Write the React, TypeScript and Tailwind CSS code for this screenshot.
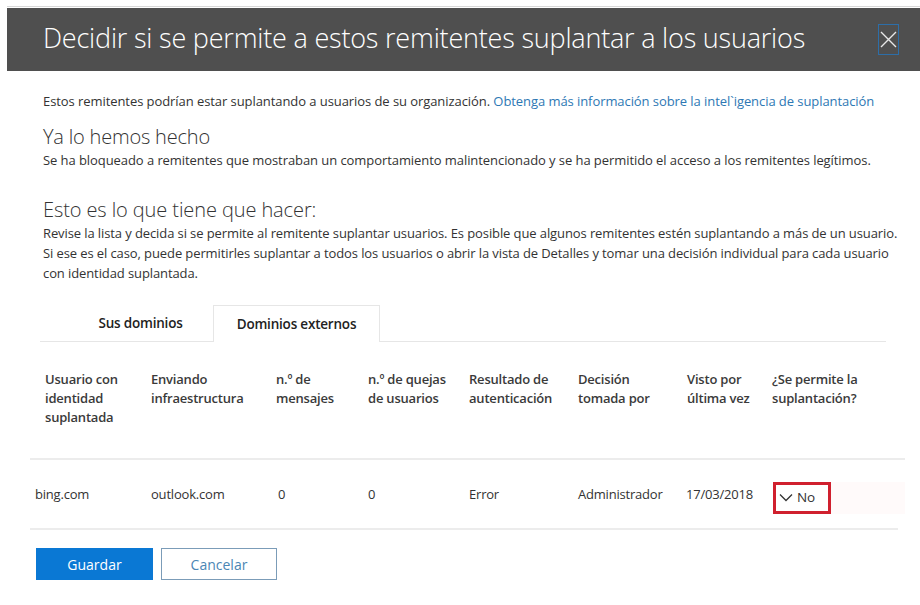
import React from "react";

const font = { fontFamily: '"Open Sans", "Noto Sans", sans-serif' };

const headers = [
  ["Usuario con", "identidad", "suplantada"],
  ["Enviando", "infraestructura"],
  ["n.º de", "mensajes"],
  ["n.º de quejas", "de usuarios"],
  ["Resultado de", "autenticación"],
  ["Decisión", "tomada por"],
  ["Visto por", "última vez"],
  ["¿Se permite la", "suplantación?"],
];

const cols = "grid grid-cols-[121px_125px_92px_101px_109px_109px_85px_133px]";

export default function App() {
  return (
    <div className="w-[920px] h-[605px] bg-white overflow-hidden text-[#333]" style={font}>
      <div className="pt-[6px] pl-[7px]">
        <div className="border-t border-[#d8d8d8] pt-px">
          <div className="h-[63px] bg-[#4f4f4f] flex items-center pl-[36px] pr-[21px] justify-between">
            <div className="text-white text-[27px] font-light tracking-[-0.2px] leading-none pb-[5px]">
              Decidir si se permite a estos remitentes suplantar a los usuarios
            </div>
            <div className="w-[21px] h-[31px] border border-[#2d6ea8] flex items-center justify-center">
              <svg width="17" height="17" viewBox="0 0 17 17">
                <path d="M1 1 L16 16 M16 1 L1 16" stroke="#e8e8e8" strokeWidth="1.4" fill="none" />
              </svg>
            </div>
          </div>
        </div>
      </div>

      <div className="pl-[43px]">
        <p className="mt-[20px] text-[13px] leading-[20px] tracking-[-0.07px]">
          Estos remitentes podrían estar suplantando a usuarios de su organización.{" "}
          <span className="text-[#2e78b4]">Obtenga más información sobre la intel`igencia de suplantación</span>
        </p>
        <h2 className="mt-[13px] text-[20px] leading-[26px] font-light tracking-[-0.2px]">Ya lo hemos hecho</h2>
        <p className="text-[13px] leading-[20px] tracking-[-0.07px]">
          Se ha bloqueado a remitentes que mostraban un comportamiento malintencionado y se ha permitido el acceso a los remitentes legítimos.
        </p>
        <h2 className="mt-[27px] text-[20px] leading-[26px] font-light tracking-[-0.1px]">Esto es lo que tiene que hacer:</h2>
        <p className="text-[13px] leading-[20px] tracking-[-0.1px] w-[877px] whitespace-nowrap">
          Revise la lista y decida si se permite al remitente suplantar usuarios. Es posible que algunos remitentes estén suplantando a más de un usuario.
          <br />
          Si ese es el caso, puede permitirles suplantar a todos los usuarios o abrir la vista de Detalles y tomar una decisión individual para cada usuario
          <br />
          con identidad suplantada.
        </p>
      </div>

      <div className="mt-[22px] ml-[40px] w-[846px] flex items-end border-b border-[#e6e6e6] h-[37px]">
        <div className="ml-[33px] w-[135px] h-[36px] flex items-center justify-center text-[13.5px] font-semibold text-[#222] tracking-[-0.2px]">
          Sus dominios
        </div>
        <div className="ml-[5px] w-[167px] h-[37px] -mb-px bg-white border border-b-0 border-[#e6e6e6] flex items-center justify-center text-[13.5px] font-semibold text-[#222] tracking-[-0.2px]">
          Dominios externos
        </div>
      </div>

      <div className="ml-[30px] w-[875px]">
        <div className={`${cols} pt-[28px] pb-[31px] border-b-2 border-[#ececec] text-[13px] leading-[19px] font-semibold text-[#3a3a3a] tracking-[-0.2px]`}>
          {headers.map((h, i) => (
            <div key={i} className={i === 0 ? "pl-[15px]" : ""}>
              {h.map((l, j) => (
                <div key={j}>{l}</div>
              ))}
            </div>
          ))}
        </div>
        <div className={`${cols} h-[70px] items-center border-b-2 border-[#ececec] text-[13px] text-[#333] tracking-[-0.2px] w-[868px]`}>
          <div className="pl-[5px]">bing.com</div>
          <div>outlook.com</div>
          <div className="pl-[2px]">0</div>
          <div>0</div>
          <div>Error</div>
          <div>Administrador</div>
          <div className="-ml-px">17/03/2018</div>
          <div className="flex items-center h-[70px] pt-[5px]">
            <div className="ml-px w-[58px] h-[32px] border-[3px] border-[#d0202e] flex items-center pl-[3px] gap-[4px]">
              <svg width="14" height="9" viewBox="0 0 14 9">
                <path d="M1 1.5 L7 7.5 L13 1.5" stroke="#333" strokeWidth="1.3" fill="none" />
              </svg>
              <span className="text-[13.5px]">No</span>
            </div>
            <div className="flex-1 h-[32px] bg-[#fffafa]" />
          </div>
        </div>
      </div>

      <div className="mt-[18px] ml-[36px] flex gap-[8px]">
        <button className="w-[117px] h-[32px] bg-[#0a78d4] text-white text-[14px]">Guardar</button>
        <button className="w-[116px] h-[32px] border border-[#7b9cb8] text-[#4b86b4] text-[14px]">Cancelar</button>
      </div>
    </div>
  );
}
